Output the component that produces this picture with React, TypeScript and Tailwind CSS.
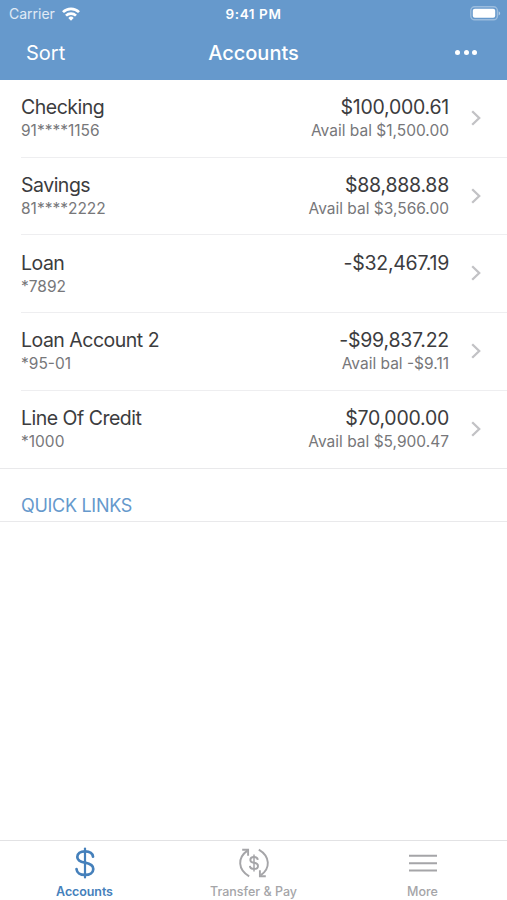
const accounts = [
  { name: 'Checking', number: '91****1156', balance: '$100,000.61', available: '$1,500.00' },
  { name: 'Savings', number: '81****2222', balance: '$88,888.88', available: '$3,566.00' },
  { name: 'Loan', number: '*7892', balance: '-$32,467.19' },
  { name: 'Loan Account 2', number: '*95-01', balance: '-$99,837.22', available: '-$9.11' },
  { name: 'Line Of Credit', number: '*1000', balance: '$70,000.00', available: '$5,900.47' },
]

function WifiIcon() {
  return (
    <svg width="18" height="14" viewBox="0 0 18 14" fill="none" stroke="white" strokeWidth="2.7">
      <path d="M1 5.1a11.4 11.4 0 0 1 16 0" />
      <path d="M4 8.6a7.1 7.1 0 0 1 10 0" />
      <path d="M9 13.8l-2.7-2.9a3.8 3.8 0 0 1 5.4 0z" fill="white" stroke="none" />
    </svg>
  )
}

function BatteryIcon() {
  return (
    <svg width="31" height="15" viewBox="0 0 31 15" fill="none">
      <rect x="0.8" y="0.8" width="26.6" height="13" rx="3.8" stroke="white" strokeOpacity="0.35" strokeWidth="1.4" />
      <rect x="2.8" y="2.8" width="22.4" height="9" rx="2" fill="white" />
      <path d="M28.7 5.2c2 .8 2 3.4 0 4.2z" fill="white" fillOpacity="0.5" />
    </svg>
  )
}

function DollarIcon() {
  return (
    <svg width="22" height="32" viewBox="0 0 22 32" fill="none" stroke="currentColor" strokeWidth="2.7" strokeLinecap="round">
      <path d="M11 1.5v29" strokeWidth="2.2" />
      <path d="M19 9.7C18.6 6.4 15.6 4.3 11 4.3c-4.6 0-7.7 2.2-7.7 5.6 0 3.5 3 4.8 7.7 5.7 5.2 1 8.3 2.7 8.3 6.3 0 3.7-3.4 6-8.3 6S2.7 25.6 2.5 22" />
    </svg>
  )
}

function TransferIcon() {
  return (
    <svg width="32" height="32" viewBox="0 0 32 32" fill="none" stroke="currentColor" strokeWidth="1.9">
      <path d="M11.2 29.4C-.2 22.6-.8 10.8 9.4 3.6" />
      <path d="M4.2 2.7h5.9v6" />
      <path d="M20.8 2.6c11.4 6.8 12 18.6 1.8 25.8" />
      <path d="M27.8 29.3h-5.9v-6" />
      <path d="M16 7.5v17" strokeWidth="1.5" />
      <path d="M19.8 12.8c-.2-1.8-1.6-2.8-3.8-2.8s-3.7 1.1-3.7 2.9c0 1.7 1.3 2.4 3.7 2.9 2.6.5 4 1.3 4 3.1s-1.6 3-4 3-4-1.1-4.1-3" />
    </svg>
  )
}

function MenuIcon() {
  return (
    <svg width="30" height="32" viewBox="0 0 30 32" stroke="currentColor" strokeWidth="1.9">
      <path d="M1 8.8h28M1 16.2h28M1 23.5h28" />
    </svg>
  )
}

function ChevronIcon() {
  return (
    <svg width="10" height="16" viewBox="0 0 10 16" fill="none" stroke="#c2c2c5" strokeWidth="2.3">
      <path d="M1.2 1.2L8.2 8l-7 6.8" />
    </svg>
  )
}

function App() {
  return (
    <div className="flex h-[900px] w-full flex-col bg-white font-['Inter',sans-serif] text-[#3c3c3e]">
      <header className="h-20 shrink-0 bg-[#6699cc] text-white">
        <div className="grid h-7 grid-cols-3 items-center px-1.5">
          <div className="-mt-px flex items-center gap-[7px] pl-[3px]">
            <span className="text-[14px] text-white/80">Carrier</span>
            <WifiIcon />
          </div>
          <span className="text-center text-[13.5px] font-semibold tracking-[0.6px]">9:41 PM</span>
          <div className="-mt-px flex justify-end">
            <BatteryIcon />
          </div>
        </div>
        <div className="grid h-[50px] grid-cols-3 items-center px-[26px]">
          <span className="text-[20px]">Sort</span>
          <h1 className="text-center text-[20px] font-medium">Accounts</h1>
          <div className="-mt-0.5 flex justify-end gap-[3.5px] pr-1">
            <span className="size-[5px] rounded-full bg-white" />
            <span className="size-[5px] rounded-full bg-white" />
            <span className="size-[5px] rounded-full bg-white" />
          </div>
        </div>
      </header>

      <main className="flex-1">
        <ul className="border-b border-[#e9e9eb]">
          {accounts.map((account, i) => (
            <li key={account.name} className="pl-[21px]">
              <div
                className={`flex h-[77.7px] pr-[26px] ${i < accounts.length - 1 ? 'border-b border-[#eeeef0]' : ''}`}
              >
                <div className="flex-1 pt-[14.4px]">
                  <p className="text-[19.5px] leading-[26px] tracking-[-0.5px]">{account.name}</p>
                  <p className="text-[15.5px] leading-[22px] text-[#77777a]">{account.number}</p>
                </div>
                <div className="pt-[14.4px] text-right">
                  <p className="text-[19.5px] leading-[26px] tracking-[-0.25px]">{account.balance}</p>
                  {account.available && (
                    <p className="text-[15.5px] leading-[22px] text-[#77777a]">Avail bal {account.available}</p>
                  )}
                </div>
                <div className="flex items-center pb-px pl-[22px]">
                  <ChevronIcon />
                </div>
              </div>
            </li>
          ))}
        </ul>
        <h2 className="h-[53px] border-b border-[#e9e9eb] pt-6 pl-[21px] text-[18px] leading-[26px] tracking-[-0.3px] text-[#6699cc]">
          QUICK LINKS
        </h2>
      </main>

      <nav className="grid h-[60px] shrink-0 grid-cols-3 border-t border-[#e2e2e4] pt-1.5 text-[12.5px] font-medium text-[#a5a5a8]">
        <div className="flex flex-col items-center text-[#4580bb]">
          <DollarIcon />
          <span className="mt-[5px] leading-4 font-semibold tracking-[-0.1px]">Accounts</span>
        </div>
        <div className="flex flex-col items-center">
          <TransferIcon />
          <span className="mt-[5px] leading-4">Transfer &amp; Pay</span>
        </div>
        <div className="flex flex-col items-center">
          <MenuIcon />
          <span className="mt-[5px] leading-4">More</span>
        </div>
      </nav>
    </div>
  )
}

export default App
